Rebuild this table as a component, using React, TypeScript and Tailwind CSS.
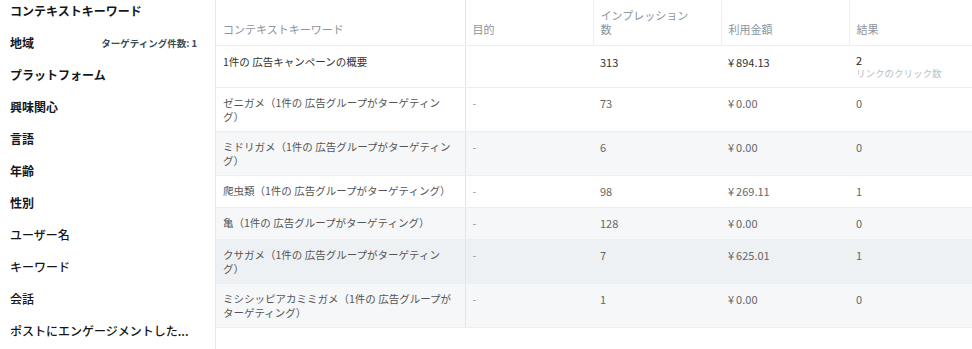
import React from "react";

const font = { fontFamily: '"Noto Sans CJK JP", "Noto Sans", sans-serif' };

const sideItems = [
  { label: "コンテキストキーワード", weight: "font-bold" },
  { label: "地域", weight: "font-bold", extra: "ターゲティング件数: 1" },
  { label: "プラットフォーム", weight: "font-bold" },
  { label: "興味関心", weight: "font-bold" },
  { label: "言語", weight: "font-semibold" },
  { label: "年齢", weight: "font-bold" },
  { label: "性別", weight: "font-bold" },
  { label: "ユーザー名", weight: "font-medium" },
  { label: "キーワード", weight: "font-medium" },
  { label: "会話", weight: "font-medium" },
  { label: "ポストにエンゲージメントした...", weight: "font-medium" },
];

const rows = [
  { name: "ゼニガメ（1件の 広告グループがターゲティング）", imp: "73", spend: "0.00", result: "0", bg: "bg-white" },
  { name: "ミドリガメ（1件の 広告グループがターゲティング）", imp: "6", spend: "0.00", result: "0", bg: "bg-[#f5f7f8]" },
  { name: "爬虫類（1件の 広告グループがターゲティング）", imp: "98", spend: "269.11", result: "1", bg: "bg-white" },
  { name: "亀（1件の 広告グループがターゲティング）", imp: "128", spend: "0.00", result: "0", bg: "bg-[#f5f7f8]" },
  { name: "クサガメ（1件の 広告グループがターゲティング）", imp: "7", spend: "625.01", result: "1", bg: "bg-[#eef1f3]" },
  { name: "ミシシッピアカミミガメ（1件の 広告グループが\nターゲティング）", imp: "1", spend: "0.00", result: "0", bg: "bg-[#f5f7f8]" },
];

function Sidebar() {
  return (
    <div className="w-[215px] shrink-0 pl-[10px] pr-[18px]">
      {sideItems.map((it) => (
        <div key={it.label} className="h-8 flex items-start justify-between pt-[2px]">
          <span className={`text-[12px] leading-[18px] whitespace-nowrap text-[#14171a] ${it.weight}`}>{it.label}</span>
          {it.extra && (
            <span className="text-[9.5px] leading-[18px] font-bold text-[#3d4b57] whitespace-nowrap">{it.extra}</span>
          )}
        </div>
      ))}
    </div>
  );
}

function Yen({ v }: { v: string }) {
  return (
    <span>
      ¥<span className="ml-[2px]">{v}</span>
    </span>
  );
}

function Name({ text }: { text: string }) {
  const lines = text.split("\n");
  if (lines.length === 1) return <>{text}</>;
  // keep the explicit break the source list uses
  return (
    <>
      {lines.map((l) => (
        <div key={l} className="whitespace-nowrap">
          {l}
        </div>
      ))}
    </>
  );
}

function Table() {
  const th = "align-bottom text-left font-normal text-[11px] leading-[14px] text-[#8b959e] px-[7px] pb-[9px] border-b border-[#eceff1]";
  const td = "h-[32px] align-top leading-[14px] px-[7px] pt-[8px] pb-[7px] border-b border-[#eceff1]";
  const name = "h-[32px] align-top text-[10.5px] leading-[14px] pl-[7px] pr-[14px] pt-[8px] pb-[7px] border-b border-[#eceff1] border-r border-r-[#e3e6e8]";
  return (
    <div className="flex-1 overflow-hidden border-l border-[#e6e9eb] min-h-[349px]">
      <table className="table-fixed border-collapse w-[761px]">
        <colgroup>
          <col className="w-[249px]" />
          <col className="w-[128px]" />
          <col className="w-[128px]" />
          <col className="w-[128px]" />
          <col className="w-[128px]" />
        </colgroup>
        <thead>
          <tr className="h-[45px]">
            <th className={`${th} border-r border-r-[#e3e6e8]`}>コンテキストキーワード</th>
            <th className={th}>目的</th>
            <th className={`${th} border-l border-l-[#eceff1]`}>
              <div>インプレッション</div>
              <div>数</div>
            </th>
            <th className={`${th} border-l border-l-[#eceff1]`}>利用金額</th>
            <th className={`${th} border-l border-l-[#eceff1]`}>結果</th>
          </tr>
        </thead>
        <tbody>
          <tr className="bg-white">
            <td className={`${name} text-[#333] pt-[9px]`}>1件の 広告キャンペーンの概要</td>
            <td className={td}></td>
            <td className={`${td} text-[11px] text-[#333] pt-[9px]`}>313</td>
            <td className={`${td} text-[11px] text-[#333] pt-[9px]`}>
              <Yen v="894.13" />
            </td>
            <td className={`${td} text-[11px] pt-[7px]`}>
              <div className="text-[#222] leading-[13px]">2</div>
              <div className="text-[9.5px] leading-[13px] text-[#b7c0c7]">リンクのクリック数</div>
            </td>
          </tr>
          {rows.map((r) => (
            <tr key={r.name} className={r.bg}>
              <td className={`${name} text-[#555]`}>
                <Name text={r.name} />
              </td>
              <td className={`${td} text-[11px] text-[#999]`}>-</td>
              <td className={`${td} text-[11px] text-[#666]`}>{r.imp}</td>
              <td className={`${td} text-[11px] text-[#666]`}>
                <Yen v={r.spend} />
              </td>
              <td className={`${td} text-[11px] text-[#666]`}>{r.result}</td>
            </tr>
          ))}
        </tbody>
      </table>
    </div>
  );
}

export default function App() {
  return (
    <div className="w-[972px] h-[349px] overflow-hidden bg-white flex" style={font}>
      <Sidebar />
      <Table />
    </div>
  );
}
